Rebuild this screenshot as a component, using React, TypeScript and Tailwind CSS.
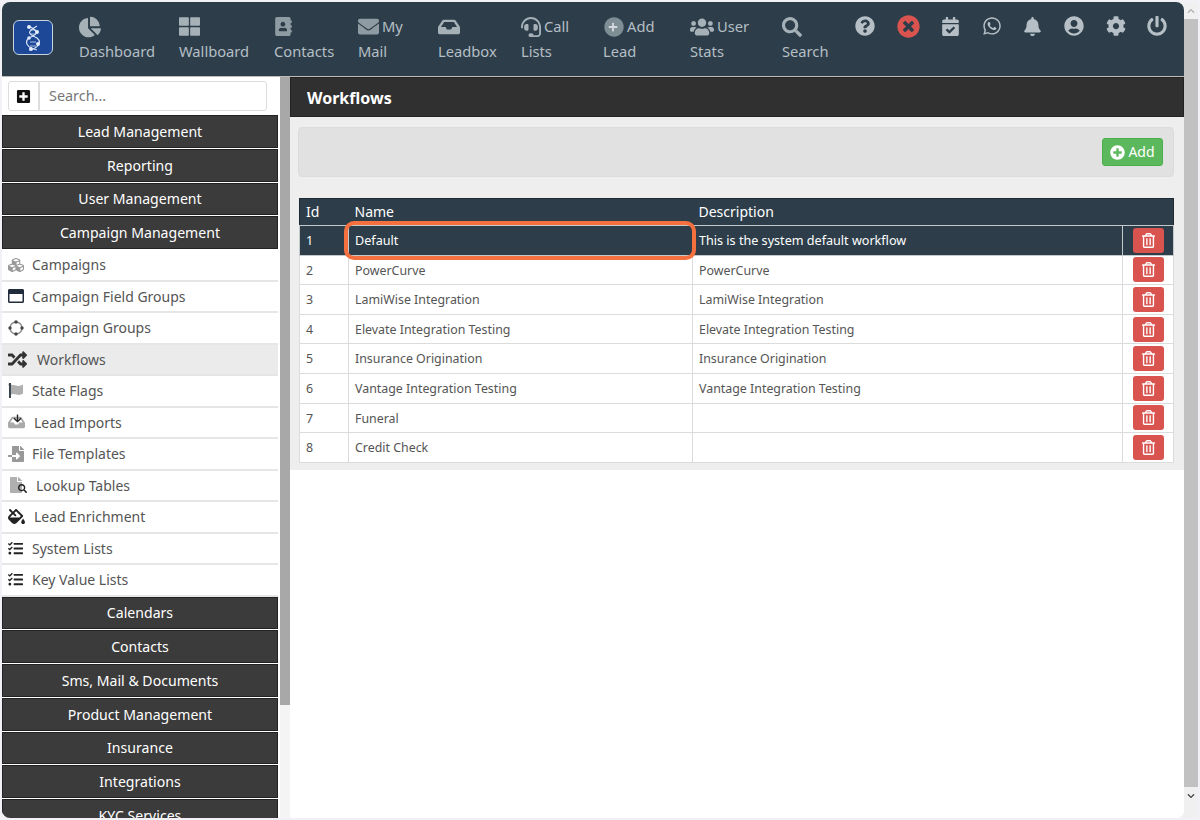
import React from "react";
import {
  FaAddressBook,
  FaArrowDown,
  FaBell,
  FaCalendarCheck,
  FaChartPie,
  FaChevronDown,
  FaCircle,
  FaCog,
  FaCubes,
  FaEnvelope,
  FaFile,
  FaFileImport,
  FaFillDrip,
  FaFlag,
  FaHeadset,
  FaInbox,
  FaPlus,
  FaPlusCircle,
  FaPlusSquare,
  FaPowerOff,
  FaQuestionCircle,
  FaRandom,
  FaRegTrashAlt,
  FaRegWindowMaximize,
  FaSearch,
  FaTasks,
  FaThLarge,
  FaTimesCircle,
  FaUserCircle,
  FaUsers,
  FaWhatsapp,
} from "react-icons/fa";

const AddIcon = () => (
  <span className="relative flex h-[21px] w-[21px] items-center justify-center">
    <FaCircle size={20} className="text-[#7f8d95]" />
    <FaPlus size={10} className="absolute left-[5px] top-[5.5px] text-[#d3dade]" />
  </span>
);

const navItems = [
  { icon: <FaChartPie size={22} />, top: "", bottom: "Dashboard", width: "w-[100px]" },
  { icon: <FaThLarge size={21} />, top: "", bottom: "Wallboard", width: "w-[95px]" },
  { icon: <FaAddressBook size={19} className="text-[#8f9ba2]" />, top: "", bottom: "Contacts", width: "w-[84px]" },
  { icon: <FaEnvelope size={21} className="text-[#8f9ba2]" />, top: "My", bottom: "Mail", width: "w-[80px]" },
  { icon: <FaInbox size={22} />, top: "", bottom: "Leadbox", width: "w-[83px]" },
  { icon: <FaHeadset size={20} />, top: "Call", bottom: "Lists", width: "w-[82px]" },
  { icon: <AddIcon />, top: "Add", bottom: "Lead", width: "w-[87px]" },
  { icon: <FaUsers size={24} />, top: "User", bottom: "Stats", width: "w-[92px]" },
  { icon: <FaSearch size={20} />, top: "", bottom: "Search", width: "w-[72px]" },
];

const topHeaders = ["Lead Management", "Reporting", "User Management", "Campaign Management"];
const bottomHeaders = ["Calendars", "Contacts", "Sms, Mail & Documents", "Product Management", "Insurance", "Integrations", "KYC Services"];

const GroupsIcon = () => (
  <svg width="16" height="16" viewBox="0 0 16 16" fill="none">
    <circle cx="8" cy="8" r="6" stroke="#888" strokeWidth="1.3" />
    <circle cx="8" cy="2" r="1.7" fill="#444" />
    <circle cx="8" cy="14" r="1.7" fill="#444" />
    <circle cx="2" cy="8" r="1.7" fill="#444" />
    <circle cx="14" cy="8" r="1.7" fill="#444" />
  </svg>
);

const FlagIcon = () => (
  <span className="relative inline-block h-[15px] w-[16px]">
    <FaFlag size={15} className="text-[#b0b0b0]" />
    <span className="absolute left-[1px] top-0 h-[15px] w-[1.5px] bg-[#3a4650]" />
  </span>
);

const ImportIcon = () => (
  <span className="relative inline-block h-[17px] w-[18px]">
    <FaInbox size={17} className="text-[#aaa]" />
    <FaArrowDown size={9} className="absolute left-[4.5px] top-0 text-[#222]" />
  </span>
);

const LookupIcon = () => (
  <span className="relative inline-block h-[16px] w-[20px]">
    <FaFile size={16} className="text-[#b0b0b0]" />
    <FaSearch size={9} className="absolute bottom-0 right-[1px] text-[#222]" />
  </span>
);

const menuItems = [
  { icon: <FaCubes size={16} className="text-[#999]" />, label: "Campaigns", pad: "w-[30px]" },
  { icon: <FaRegWindowMaximize size={16} className="text-[#222b3a]" />, label: "Campaign Field Groups", pad: "w-[30px]" },
  { icon: <GroupsIcon />, label: "Campaign Groups", pad: "w-[30px]" },
  { icon: <FaRandom size={19} className="text-[#333]" />, label: "Workflows", pad: "w-[35px]", active: true },
  { icon: <FlagIcon />, label: "State Flags", pad: "w-[30px]" },
  { icon: <ImportIcon />, label: "Lead Imports", pad: "w-[32px]" },
  { icon: <FaFileImport size={16} className="text-[#999]" />, label: "File Templates", pad: "w-[30px]" },
  { icon: <LookupIcon />, label: "Lookup Tables", pad: "w-[34px]" },
  { icon: <FaFillDrip size={17} className="text-[#222]" />, label: "Lead Enrichment", pad: "w-[32px]" },
  { icon: <FaTasks size={15} className="text-[#222]" />, label: "System Lists", pad: "w-[30px]" },
  { icon: <FaTasks size={15} className="text-[#222]" />, label: "Key Value Lists", pad: "w-[30px]" },
];

const rows = [
  { id: 1, name: "Default", description: "This is the system default workflow" },
  { id: 2, name: "PowerCurve", description: "PowerCurve" },
  { id: 3, name: "LamiWise Integration", description: "LamiWise Integration" },
  { id: 4, name: "Elevate Integration Testing", description: "Elevate Integration Testing" },
  { id: 5, name: "Insurance Origination", description: "Insurance Origination" },
  { id: 6, name: "Vantage Integration Testing", description: "Vantage Integration Testing" },
  { id: 7, name: "Funeral", description: "" },
  { id: 8, name: "Credit Check", description: "" },
];

const SideHeader = ({ label }: { label: string }) => (
  <div className="mb-[1px] flex h-[32.75px] shrink-0 items-center justify-center border border-[#222] bg-[#3b3b3b] text-[14.1px] text-white">
    {label}
  </div>
);

const Logo = () => (
  <div className="flex h-[35px] w-[40px] items-center justify-center rounded-[6px] border border-[#c8d4e0] bg-[#1d4797]">
    <svg width="16" height="28" viewBox="0 0 16 28" fill="none" stroke="#d7e3f5" strokeWidth="1.2">
      <path d="M4 2 C 14 8, 14 9, 4 14 C -1 18, 2 24, 12 26" />
      <path d="M12 2 C 2 8, 2 9, 12 14 C 17 18, 14 24, 4 26" />
      <path d="M5 6 H11 M5 10 H11 M5 18 H11 M5 22 H11" strokeWidth="0.8" />
      <circle cx="4" cy="3" r="1.4" fill="#fff" />
      <circle cx="12" cy="8" r="1.4" fill="#fff" />
      <circle cx="4" cy="14" r="1.2" fill="#fff" />
      <circle cx="13" cy="20" r="1.4" fill="#fff" />
      <circle cx="6" cy="25" r="1.4" fill="#fff" />
    </svg>
  </div>
);

const ScrollArrow = ({ up }: { up?: boolean }) => (
  <div className="flex h-[17px] items-center justify-center">
    <FaChevronDown size={8} className={up ? "rotate-180 text-[#b0b0b0]" : "text-[#444]"} />
  </div>
);

const App = () => {
  return (
    <div className="flex h-[820px] w-[1200px] overflow-hidden bg-[#f1f1f6] pl-[2px] pt-[2px] font-['Noto_Sans',sans-serif]">
      <div className="flex h-[816px] w-[1182px] shrink-0 flex-col overflow-hidden rounded-[8px] bg-white">
        {/* Barra superior */}
        <header className="flex h-[74px] shrink-0 bg-[#2d3e4a] text-[14.7px] leading-[25px] text-[#b5bfc5]">
          <div className="ml-[11px] mt-[18px] w-[66px]">
            <Logo />
          </div>
          {navItems.map((item) => (
            <div key={item.bottom} className={`${item.width} pt-[12px]`}>
              <div className="flex h-[25px] items-center gap-[3px] text-[#a5b0b7]">
                {item.icon}
                {item.top && <span className="text-[#b5bfc5]">{item.top}</span>}
              </div>
              <div>{item.bottom}</div>
            </div>
          ))}
          <div className="ml-[1px] flex h-[48px] items-center gap-[21.6px] text-[#b5bfc5]">
            <FaQuestionCircle size={20} />
            <FaTimesCircle size={23} className="text-[#d9534f]" />
            <FaCalendarCheck size={19} />
            <FaWhatsapp size={20} />
            <FaBell size={19} />
            <FaUserCircle size={20} />
            <FaCog size={20} />
            <FaPowerOff size={20} />
          </div>
        </header>

        <div className="flex min-h-0 flex-1 border-t border-[#bbb]">
          {/* Menu lateral */}
          <aside className="w-[276px] shrink-0 overflow-hidden">
            <div className="flex h-[38px] items-center pl-[6px]">
              <div className="flex h-[30px] w-[31px] items-center justify-center rounded-l-[3px] border border-[#ddd] bg-white">
                <FaPlusSquare size={15} className="text-[#111]" />
              </div>
              <input
                placeholder="Search..."
                className="h-[30px] w-[228px] rounded-r-[3px] border border-[#ddd] bg-white px-[9px] pb-[2px] text-[14.4px] text-[#666] placeholder-[#777] outline-none"
              />
            </div>
            {topHeaders.map((label) => (
              <SideHeader key={label} label={label} />
            ))}
            {menuItems.map((item) => (
              <div
                key={item.label}
                className={`flex h-[31.5px] items-center border-b-2 border-[#e6e6e6] pl-[6px] text-[14px] text-[#555] ${item.active ? "bg-[#ebebeb]" : "bg-white"}`}
              >
                <span className={`flex ${item.pad} shrink-0 items-center -mr-[6px]`}>{item.icon}</span>
                <span className="ml-[6px] -translate-x-[6px]">{item.label}</span>
              </div>
            ))}
            {bottomHeaders.map((label) => (
              <SideHeader key={label} label={label} />
            ))}
          </aside>

          {/* Separador con scroll */}
          <div className="ml-[2px] w-[10px] shrink-0 bg-[#f4f4f4]">
            <div className="h-[628px] bg-[#a8a8a8]" />
          </div>

          {/* Contenido */}
          <main className="min-w-0 flex-1 bg-white">
            <div className="flex h-[40px] items-center border border-[#222] bg-[#303030] pl-[16px] pt-[2px] text-[16px] font-bold text-white">
              Workflows
            </div>
            <div className="bg-[#eeeeee] pb-[7px] pl-[8px] pr-[10px] pt-[10px]">
              <div className="mb-[21px] flex h-[50px] items-center justify-end rounded-[4px] border border-[#dcdcdc] bg-[#e1e1e1] pr-[10px]">
                <button className="flex h-[28px] w-[61px] items-center justify-center gap-[3px] rounded-[3px] border border-[#4cae4c] bg-[#5cb85c] pb-[2px] text-[14px] text-white">
                  <FaPlusCircle size={15} className="mt-[2px]" />
                  Add
                </button>
              </div>
              <table className="ml-[1px] w-[874px] table-fixed border-collapse bg-white text-[12.4px] text-[#555]">
                <colgroup>
                  <col className="w-[49px]" />
                  <col className="w-[344px]" />
                  <col className="w-[430px]" />
                  <col className="w-[51px]" />
                </colgroup>
                <thead>
                  <tr className="h-[27px] border border-[#1d2a33] bg-[#2d3e4a] text-left text-[14px] text-white">
                    <th className="px-[6px] pb-[2px] font-normal">Id</th>
                    <th className="px-[6px] pb-[2px] font-normal">Name</th>
                    <th className="px-[6px] pb-[2px] font-normal">Description</th>
                    <th />
                  </tr>
                </thead>
                <tbody>
                  {rows.map((row) => {
                    const selected = row.id === 1;
                    const cell = selected
                      ? "border border-[#c4c9cc] px-[6px] pt-[2px] text-[12.6px] text-white"
                      : "border border-[#dcdcdc] px-[6px] pt-[2px]";
                    return (
                      <tr key={row.id} className={`h-[29.6px] ${selected ? "bg-[#2d3e4a]" : "bg-white"}`}>
                        <td className={cell}>{row.id}</td>
                        <td className={cell}>{row.name}</td>
                        <td className={cell}>{row.description}</td>
                        <td className={cell}>
                          <button className="mx-auto -mt-[2px] flex h-[25px] w-[31px] items-center justify-center rounded-[3px] bg-[#d9534f] text-white">
                            <FaRegTrashAlt size={15} />
                          </button>
                        </td>
                      </tr>
                    );
                  })}
                </tbody>
              </table>
            </div>
          </main>
        </div>
      </div>

      {/* Scroll de la pagina */}
      <div className="h-[816px] w-[14px] shrink-0 bg-[#f0f0f0]">
        <ScrollArrow up />
        <div className="h-[768px] bg-[#c1c1c1]" />
        <ScrollArrow />
      </div>

      {/* Resaltado de la captura */}
      <div className="pointer-events-none absolute left-[344px] top-[221px] h-[39px] w-[352px] rounded-[10px] border-[4px] border-[#f5703f]" />
    </div>
  );
};

export default App;
